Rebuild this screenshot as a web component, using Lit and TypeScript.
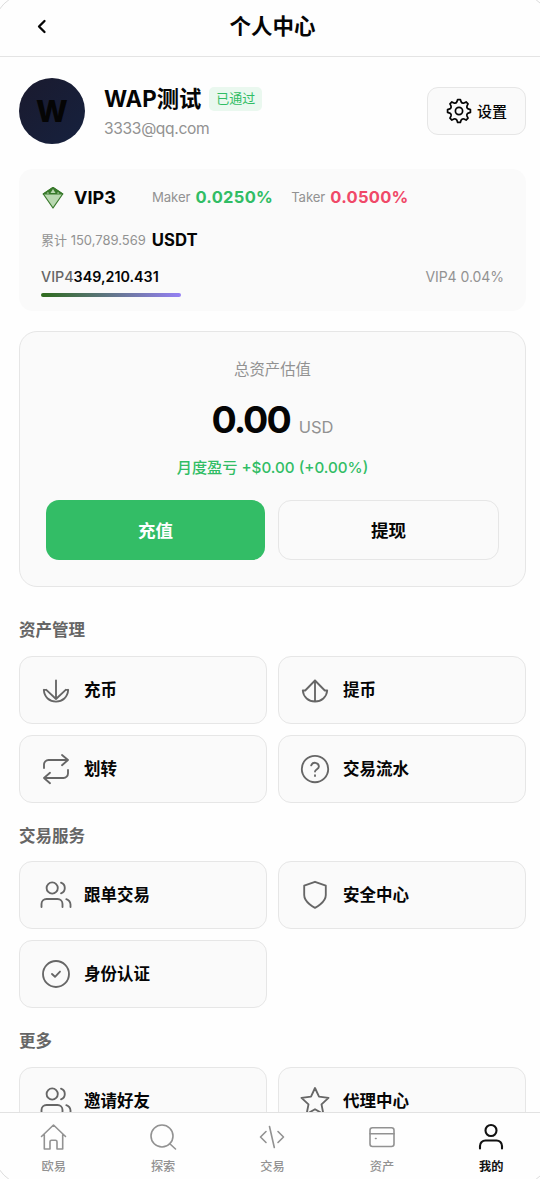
import { LitElement, html, css, svg } from "lit";
import { customElement } from "lit/decorators.js";
import { classMap } from "lit/directives/class-map.js";

const users = svg`<path d="M22.500 28v-3a5 5 0 0 0-5-5H6.500a5 5 0 0 0-5 5v3"/><circle cx="12.200" cy="9" r="5.600"/><path d="M30.500 28v-2.500a6 6 0 0 0-4.200-5.300M21 3.700a5.600 5.600 0 0 1 0 10.600"/>`;

const icons: Record<string, unknown> = {
  deposit: svg`<path d="M16 6.300V25M3.800 15.800h2.400M25.800 15.800h2.400M3.800 15.800C4.300 23.300 9.500 27.600 16 27.600s11.700-4.300 12.200-11.800M6.300 15.800L16 25l9.700-9.200"/>`,
  withdraw: svg`<path d="M16 6.500V27.500M3.800 16.500c.5 6.500 5.700 11 12.200 11s11.700-4.500 12.200-11M3.800 16.500h2.400L16 6.500l9.800 10h2.400"/>`,
  transfer: svg`<path d="M22 2l6 5-6 5.200M28 7H8.500A4.500 4.500 0 0 0 4 11.500V15M10 19.800L4 25l6 5.200M4 25h19.500a4.500 4.500 0 0 0 4.500-4.500V17"/>`,
  help: svg`<circle cx="16" cy="16" r="13.200"/><path d="M12.200 12.300a4 4 0 0 1 7.700 1.200c0 2.700-3.900 3.200-3.900 5M16 22.200v.8"/>`,
  users,
  shield: svg`<path d="M16 28.800s10.800-5.300 10.800-12.900V6.700L16 2.800 5.200 6.700v9.200c0 7.600 10.800 12.900 10.800 12.900z"/>`,
  check: svg`<circle cx="16" cy="16" r="13"/><path d="M12 16l3 2.800 5-5.200"/>`,
  star: svg`<path d="M16 3l4 8.700 9.500 1.200-7 6.500 1.900 9.600L16 24.300 7.600 29l1.900-9.600-7-6.500 9.500-1.200z"/>`,
};

const tabIcons: Record<string, unknown> = {
  home: svg`<path d="M1.500 13.500L13.500 2l12 11.500M4.300 11.500V26H10v-7.200c0-1 .6-1.600 1.600-1.600h3.800c1 0 1.600.6 1.600 1.600V26h5.700V11.500"/>`,
  search: svg`<circle cx="13" cy="13" r="11"/><path d="M20.500 20.500l6 5.500"/>`,
  code: svg`<path d="M8 8.500L2.500 14 8 19.500M20 8.500l5.500 5.500-5.500 5.500M11.500 3.500l4.800 21"/>`,
  wallet: svg`<rect x="2" y="4.800" width="24" height="18.700" rx="2.500"/><path d="M2 10.800h24M7.500 15.500h.6"/>`,
  user: svg`<circle cx="14" cy="7.500" r="5.500"/><path d="M3 25.500V23a5.500 5.500 0 0 1 5.500-5.500h11A5.500 5.500 0 0 1 25 23v2.500"/>`,
};

const sections = [
  { title: "资产管理", items: [["deposit", "充币"], ["withdraw", "提币"], ["transfer", "划转"], ["help", "交易流水"]] },
  { title: "交易服务", items: [["users", "跟单交易"], ["shield", "安全中心"], ["check", "身份认证"]] },
  { title: "更多", items: [["users", "邀请好友"], ["star", "代理中心"]] },
];

const tabs = [["home", "欧易"], ["search", "探索"], ["code", "交易"], ["wallet", "资产"], ["user", "我的"]];

const gearPath = (() => {
  const teeth = 8;
  const point = (radius: number, angle: number) =>
    `${(13 + radius * Math.cos(angle)).toFixed(2)} ${(13 + radius * Math.sin(angle)).toFixed(2)}`;
  let d = "";
  for (let i = 0; i < teeth; i++) {
    const a = (i / teeth) * Math.PI * 2 - Math.PI / 2;
    const next = a + (Math.PI * 2) / teeth;
    d += `${i ? "L" : "M"}${point(11.5, a - 0.12)}L${point(11.5, a + 0.12)}L${point(9.5, a + 0.22)}Q${point(8, (a + next) / 2)} ${point(9.5, next - 0.22)}`;
  }
  return d + "Z";
})();

@customElement("app-root")
export class AppRoot extends LitElement {
  static styles = css`
    :host {
      display: flex;
      flex-direction: column;
      position: relative;
      width: 540px;
      height: 1179px;
      overflow: hidden;
      background: #fefefe;
      color: #050505;
      font-family: Inter, "Noto Sans CJK SC", sans-serif;
      line-height: 1;
    }
    * { box-sizing: border-box; }
    svg { display: block; flex: none; fill: none; stroke: currentColor; stroke-linecap: round; stroke-linejoin: round; }
    .bezel {
      position: absolute;
      inset: -7px -12px -7px -7px;
      border: 1.5px solid #dcdcdc;
      border-radius: 36px;
      pointer-events: none;
    }
    .header {
      flex: none;
      display: grid;
      grid-template-columns: 84px 1fr 84px;
      align-items: center;
      width: 545px;
      height: 57px;
      padding-bottom: 3px;
      border-bottom: 1px solid #e4e4e4;
    }
    .back { margin: 0 0 1px 35px; }
    .title { text-align: center; font-size: 21.5px; font-weight: 600; }
    .content { flex: 1; min-height: 0; overflow: hidden; padding: 20px 14px 0 19px; }
    .profile { display: flex; align-items: center; height: 68px; }
    .avatar {
      display: grid; place-items: center;
      width: 66px; height: 66px; margin: 0 19px 1px 0;
      border-radius: 50%;
      background: linear-gradient(135deg, #1a1a2e, #16213e);
      font-size: 30px; font-weight: 800;
    }
    .who { flex: 1; display: flex; flex-direction: column; gap: 5px; padding-top: 3px; }
    .name-row { display: flex; align-items: center; gap: 8px; height: 27px; }
    .name { font-size: 22.3px; font-weight: 700; white-space: nowrap; }
    .badge {
      display: grid; place-items: center;
      height: 24px; margin-bottom: 1px; padding: 0 7px; border-radius: 5px;
      background: #eaf8ef; color: #31bd65; font-size: 13px;
    }
    .email { font-size: 15.6px; letter-spacing: -.35px; color: #929292; line-height: 22px; }
    .settings {
      display: flex; align-items: center; justify-content: center; gap: 5px;
      width: 99px; height: 48px; border: 1px solid #e6e6e6; border-radius: 11px;
      background: #fafafa; font-size: 15px; font-weight: 500;
    }
    .vip {
      display: flex; flex-direction: column;
      height: 142px; margin-top: 24px; padding: 15px 22px 0;
      border-radius: 14px; background: #fafafa;
    }
    .row { display: flex; align-items: center; white-space: nowrap; }
    .rates { height: 27px; }
    .level { margin-left: 9px; width: 78px; font-size: 18px; font-weight: 700; }
    .rate-label { font-size: 13.2px; letter-spacing: -.1px; color: #929292; margin-right: 5px; }
    .rate { font-size: 16.5px; font-weight: 700; letter-spacing: .3px; }
    .up { color: #31bd65; margin-right: 18px; }
    .down { color: #f04868; }
    .total { height: 20px; margin-top: 19px; gap: 6px; font-size: 13px; color: #929292; }
    .unit { font-size: 16.7px; font-weight: 700; color: #050505; }
    .next { height: 18px; margin-top: 18px; justify-content: space-between; font-size: 14.3px; font-weight: 500; color: #666; }
    .needed { font-weight: 600; color: #050505; }
    .next-rate { color: #929292; font-weight: 400; font-size: 14px; letter-spacing: -.05px; }
    .track { width: 140px; height: 4px; margin-top: 7px; border-radius: 2px; background: linear-gradient(90deg, #2e6b1c, #9580f5); }
    .assets {
      display: flex; flex-direction: column; align-items: center;
      height: 256px; margin-top: 20px; padding: 29px 26px 0;
      border: 1px solid #e6e6e6; border-radius: 18px; background: #fafafa;
    }
    .caption { font-size: 15.4px; line-height: 18px; color: #929292; }
    .balance { display: flex; align-items: baseline; gap: 9px; margin-top: 19px; height: 46px; line-height: 44px; }
    .amount { font-size: 37.5px; font-weight: 700; letter-spacing: -2px; }
    .currency { font-size: 16.5px; color: #929292; }
    .profit { margin-top: 14px; font-size: 15.2px; line-height: 20px; font-weight: 500; color: #31bd65; white-space: nowrap; }
    .actions { display: grid; grid-template-columns: 219px 221px; gap: 13px; margin-top: 22px; }
    .action {
      display: grid; place-items: center; height: 60px; padding-top: 2px;
      border: 1px solid #e6e6e6; border-radius: 13px;
      font-size: 17.5px; font-weight: 700;
    }
    .primary { border: 0; background: #33bd66; color: #fff; }
    .section { margin-top: 20.5px; }
    .assets + .section { margin-top: 31px; }
    .section-title { height: 23px; padding-top: 1px; line-height: 22px; font-size: 16.5px; font-weight: 600; color: #666; }
    .grid { display: grid; grid-template-columns: 1fr 1fr; gap: 11px; margin-top: 15px; }
    .section + .section .grid { margin-top: 14.9px; }
    .tile {
      display: flex; align-items: center; gap: 12px;
      height: 68px; padding: 0 20px;
      border: 1px solid #e6e6e6; border-radius: 13px; background: #fafafa;
      font-size: 16.5px; font-weight: 600; white-space: nowrap;
    }
    .tile svg { color: #666; }
    .tabs {
      flex: none; display: grid; grid-template-columns: repeat(5, 1fr);
      width: 547px; height: 67px; margin-left: -1px; padding-top: 10px;
      border-top: 1px solid #e2e2e2; background: #fefefe;
    }
    .tab { display: flex; flex-direction: column; align-items: center; gap: 10px; color: #929292; font-size: 12.2px; font-weight: 500; }
    .active { color: #111; font-weight: 700; }
  `;

  render() {
    return html`
      <header class="header">
        <svg class="back" width="14" height="18" viewBox="0 0 14 18" stroke-width="2.300"><path d="M9.500 4L4 9.500l5.500 5.500"/></svg>
        <div class="title">个人中心</div>
      </header>
      <main class="content">
        <div class="profile">
          <div class="avatar">W</div>
          <div class="who">
            <div class="name-row"><span class="name">WAP测试</span><span class="badge">已通过</span></div>
            <div class="email">3333@qq.com</div>
          </div>
          <div class="settings">
            <svg width="26" height="26" viewBox="0 0 26 26" stroke-width="1.700"><path d=${gearPath}/><circle cx="13" cy="13" r="3.600"/></svg>
            <span>设置</span>
          </div>
        </div>
        <div class="vip">
          <div class="row rates">
            <svg width="24" height="24" viewBox="0 0 24 24" stroke-width="1.200">
              <path fill="#b9d8b1" stroke="#397a2c" d="M2.300 8L12 1.500 21.700 8 12 22z"/>
              <path fill="#397a2c" stroke="#397a2c" d="M2.300 8L12 1.500 21.700 8z"/>
              <path fill="#b9d8b1" stroke="none" d="M12 3l2.500 4h-5zM7 6L5.500 7.500H8zM17 6l1.500 1.500H16z"/>
            </svg>
            <span class="level">VIP3</span>
            <span class="rate-label">Maker</span><span class="rate up">0.0250%</span>
            <span class="rate-label">Taker</span><span class="rate down">0.0500%</span>
          </div>
          <div class="row total"><span>累计 150,789.569</span><span class="unit">USDT</span></div>
          <div class="row next"><span>VIP4<span class="needed">349,210.431</span></span><span class="next-rate">VIP4 0.04%</span></div>
          <div class="track"></div>
        </div>
        <div class="assets">
          <div class="caption">总资产估值</div>
          <div class="balance"><span class="amount">0.00</span><span class="currency">USD</span></div>
          <div class="profit">月度盈亏 +$0.00 (+0.00%)</div>
          <div class="actions"><div class="action primary">充值</div><div class="action">提现</div></div>
        </div>
        ${sections.map(
          (section) => html`<section class="section">
            <div class="section-title">${section.title}</div>
            <div class="grid">
              ${section.items.map(
                ([icon, label]) => html`<div class="tile">
                  <svg width="32" height="32" viewBox="0 0 32 32" stroke-width="1.850">${icons[icon]}</svg><span>${label}</span>
                </div>`
              )}
            </div>
          </section>`
        )}
      </main>
      <nav class="tabs">
        ${tabs.map(
          ([icon, label]) => html`<div class=${classMap({ tab: true, active: icon === "user" })}>
            <svg width="28" height="28" viewBox="0 0 28 28" stroke-width=${icon === "user" ? 2.1 : 1.6}>${tabIcons[icon]}</svg><span>${label}</span>
          </div>`
        )}
      </nav>
      <div class="bezel"></div>
    `;
  }
}
